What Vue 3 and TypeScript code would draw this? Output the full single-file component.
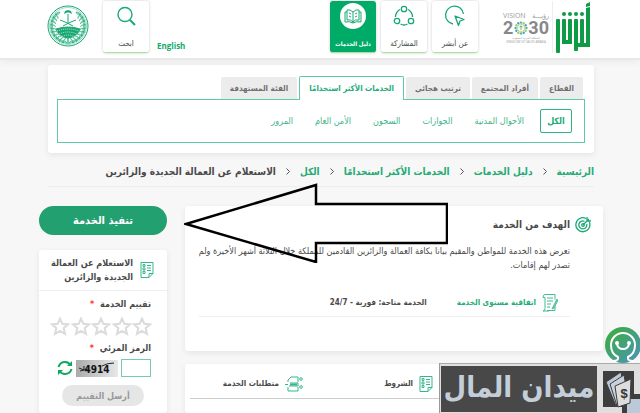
<script setup lang="ts">
import { ref } from 'vue'

const tabs = ['القطاع', 'أفراد المجتمع', 'ترتيب هجائي', 'الخدمات الأكثر استخدامًا', 'الفئة المستهدفة']
const activeTab = ref(3)
const filters = ['الكل', 'الأحوال المدنية', 'الجوازات', 'السجون', 'الأمن العام', 'المرور']
const activeFilter = ref(0)
const crumbs = ['الرئيسية', 'دليل الخدمات', 'الخدمات الأكثر استخدامًا', 'الكل']
const rating = ref(0)
const code = ref('')
const leaves = Array.from({ length: 11 }, (_, i) => i)
const petals = Array.from({ length: 12 }, (_, i) => i * 30)
</script>

<template>
  <div class="page" dir="rtl" lang="ar">
    <header class="header">
      <a class="absher" href="#" aria-label="أبشر">
        <svg width="36" height="52" viewBox="0 0 36 52" fill="#0d9b46">
          <rect x="1" y="17" width="4" height="34" rx="1" />
          <rect x="7" y="17" width="4" height="25" rx="1" />
          <rect x="13" y="17" width="4" height="25" rx="1" />
          <rect x="19" y="17" width="4" height="32" rx="1" />
          <rect x="25" y="17" width="4" height="28" rx="1" />
          <path d="M31 6l4-1v40h-4z" />
          <path d="M31 2l4-2v4l-4 1z" />
          <path d="M7 38h10v4H7zM19 41h16v4H19z" />
          <circle cx="9" cy="12" r="2" /><circle cx="15" cy="12" r="2" /><circle cx="21" cy="12" r="2" /><circle cx="27" cy="12" r="2" />
        </svg>
      </a>
      <div class="vision" dir="ltr">
        <div class="vision-top"><span>VISION</span><span>رؤيـــة</span></div>
        <div class="vision-year">
          <span>2</span>
          <svg width="14" height="14" viewBox="-7 -7 14 14">
            <circle v-for="(a, i) in petals" :key="a" r="1.2" cy="-5.4" :transform="`rotate(${a})`" :fill="['#4fb6a0', '#9ccb62', '#4a9cc7'][i % 3]" />
            <circle v-for="a in petals" :key="'i' + a" r=".8" cy="-3.6" :transform="`rotate(${a + 15})`" fill="#b8d98a" />
            <path d="M0-2v4M-1.500-1L0-2l1.500 1" stroke="#3a8a5a" stroke-width=".7" fill="none" />
          </svg>
          <span>30</span>
        </div>
        <div class="vision-sub">المملكة العربية السعودية</div>
        <div class="vision-sub">KINGDOM OF SAUDI ARABIA</div>
      </div>
      <nav class="tiles">
        <a class="tile" href="#">
          <svg width="22" height="24" viewBox="0 0 22 24" fill="none" stroke="#18a874" stroke-width="1.300">
            <path d="M9 21A9 9 0 1 1 19.500 11" /><path d="M11 13l9 3.500-4 1.500-1.500 4.500z" stroke-linejoin="round" />
          </svg>
          <span>عن أبشر</span>
        </a>
        <a class="tile" href="#">
          <svg width="22" height="24" viewBox="0 0 22 24" fill="none" stroke="#18a874" stroke-width="1.300">
            <circle cx="11" cy="6" r="2.700" /><circle cx="4" cy="18" r="2.700" /><circle cx="18" cy="18" r="2.700" />
            <path d="M7 6.500Q2.500 9 2.500 14M15 6.500Q19.500 9 19.500 14M7.500 21Q11 23 14.500 21" />
          </svg>
          <span>المشاركة</span>
        </a>
        <a class="tile tile-on" href="#">
          <svg width="26" height="26" viewBox="0 0 26 26" fill="none" stroke="#18a874">
            <circle cx="13" cy="13" r="13" fill="#fff" stroke="none" />
            <path d="M13 9v11M13 9q-3-3-6-2v10q4-1 6 2 2-3 6-2V7q-3-1-6 2zM7 9H5v10q5-1 8 1 3-2 8-1V9h-2M9 10l2 1M9 13l2 1M17 10l-2 1M17 13l-2 1" />
          </svg>
          <span>دليل الخدمات</span>
        </a>
      </nav>
      <a class="english" href="#" lang="en">English</a>
      <a class="tile" href="#">
        <svg width="20" height="24" viewBox="0 0 20 24" fill="none" stroke="#18a874" stroke-width="1.400">
          <circle cx="9" cy="11.500" r="7" /><path d="M14 17l5 5" stroke-width="2" />
        </svg>
        <span>ابحث</span>
      </a>
      <svg class="emblem" width="42" height="42" viewBox="-21 -21 42 42" fill="none" stroke="#18a874">
        <circle r="20" stroke-width="1" /><circle r="18.500" stroke-width=".4" />
        <g v-for="s in [1, -1]" :key="s" :transform="`scale(${s} 1)`">
          <path v-for="n in leaves" :key="n" d="M0 17.500q3-4 5-2-2 2-5 2M0 17.500q1-5-1.500-5" :transform="`rotate(${-n * 13 - 2})`" stroke-width=".6" fill="#a5dcc6" />
        </g>
        <path d="M-12 3q12-4 24 0-3 8-12 9Q-9 11-12 3z" fill="#18a874" />
        <path d="M-11 5q11-4 22 0M-9 8q9-4 18 0M-6 10.500q6-3 12 0" stroke="#fff" stroke-width=".7" stroke-dasharray="1 1" />
        <path d="M0-12v9" /><path d="M-8-6Q-2-4 5 0M8-6Q2-4-5 0" />
        <path d="M-4-12l1-3 3-1 3 1 1 3-3-1.500h-2z" fill="#18a874" stroke="none" />
      </svg>
    </header>

    <section class="services">
      <div class="tabs" role="tablist">
        <button v-for="(t, i) in tabs" :key="t" role="tab" :aria-selected="i === activeTab" :class="{ on: i === activeTab }" @click="activeTab = i">{{ t }}</button>
      </div>
      <div class="filters">
        <button v-for="(f, i) in filters" :key="f" :class="{ on: i === activeFilter }" @click="activeFilter = i">{{ f }}</button>
      </div>
    </section>

    <nav class="crumbs">
      <template v-for="c in crumbs" :key="c">
        <a href="#">{{ c }}</a>
        <svg width="4" height="7" viewBox="0 0 4 7" fill="none" stroke="#555"><path d="M.5.5l3 3-3 3" /></svg>
      </template>
      <span>الاستعلام عن العمالة الجديدة والزائرين</span>
    </nav>

    <main class="content">
      <div class="main">
        <article class="card goal">
          <h2>
            <svg width="16" height="17" viewBox="0 0 16 17" fill="none" stroke="#18a874" stroke-width="1.300">
              <path d="M11 2.500A7 7 0 1 0 14.300 6M9.500 5.300A4 4 0 1 0 11.700 8" /><circle cx="8" cy="9" r="1.300" /><path d="M8 9l6-6M12 1v4h4" />
            </svg>
            الهدف من الخدمة
          </h2>
          <p>تعرض هذه الخدمة للمواطن والمقيم بيانا بكافة العمالة والزائرين القادمين للمملكة خلال الثلاثة أشهر الأخيرة ولم تصدر لهم إقامات.</p>
          <div class="level">
            <a href="#">
              <svg width="16" height="18" viewBox="0 0 16 18" fill="none" stroke="#42bd90">
                <path d="M3 .5h10v5M13 12v4.500H5M3 .5q-2 0-2 3h2v11q0 2.500-2 2.500h6M5 4h6M5 7h6M5 10h4M5 13h3" /><path d="M15 5l-4 8-1 2 2-1 3.500-7z" fill="#8ed8bc" />
              </svg>
              اتفاقية مستوى الخدمة
            </a>
            <span>الخدمة متاحة: فورية - 24/7</span>
          </div>
        </article>
        <article class="card details">
          <div class="detail-tabs">
            <a href="#" class="steps">
              <svg width="14" height="16" viewBox="0 0 14 16" fill="none" stroke="#18a874"><path d="M1 3h12v9H1zM4 6h6M4 9h6" /></svg>
              الخطوات
            </a>
            <a href="#">
              <svg width="14" height="16" viewBox="0 0 14 16" fill="none" stroke="#35b887">
                <path d="M1 .5h12v11l-4 4H1zM9 15.500v-4h4M7 3.500h4M7 6h4M7 8.500h4" /><path d="M3 2.500h2v2H3zM3 6h2v2H3zM3 9.500h2v2H3z" />
              </svg>
              الشروط
            </a>
            <a href="#">
              <svg width="18" height="16" viewBox="0 0 18 16" fill="none" stroke="#35b887">
                <path d="M3 6V4l3-3h7v5M3 11v4h10v-4M0 8.500h3M5 7h8v3H4" /><path d="M5 8.500h7" stroke-width="2" /><circle cx="16" cy="3" r="1.300" /><circle cx="16" cy="11" r="1.300" />
              </svg>
              متطلبات الخدمة
            </a>
          </div>
        </article>
      </div>

      <aside class="side">
        <button class="run">تنفيذ الخدمة</button>
        <form class="card survey" @submit.prevent>
          <h3>
            <svg width="14" height="16" viewBox="0 0 14 16" fill="none" stroke="#35b887">
              <path d="M1 .5h12v11l-4 4H1zM9 15.500v-4h4M7 3.500h4M7 6h4M7 8.500h4" /><path d="M3 2.500h2v2H3zM3 6h2v2H3zM3 9.500h2v2H3z" />
            </svg>
            <span>الاستعلام عن العمالة الجديدة والزائرين</span>
          </h3>
          <div class="fields">
            <div class="label">تقييم الخدمة <b>*</b></div>
            <div class="stars">
              <button v-for="n in 5" :key="n" type="button" :aria-label="`${n}`" @click="rating = n">
                <svg width="20" height="19" viewBox="1 1 18 18" :fill="n <= rating ? '#ddd' : 'none'" stroke="#dcdcdc" stroke-width="2"><path d="M10 2.500l2.200 5 5.300.5-4 3.600 1.200 5.400L10 14.200 5.300 17l1.200-5.400-4-3.600 5.300-.5z" /></svg>
              </button>
            </div>
            <label class="label" for="captcha">الرمز المرئي <b>*</b></label>
            <div class="captcha">
              <input id="captcha" v-model="code" type="text" />
              <div class="code">
                <span>4914</span>
                <svg viewBox="0 0 42 17" fill="none" stroke="#222"><path d="M3 8l5 2V6M4 11l8-2M26 6q5-3 12-3" /></svg>
              </div>
              <button type="button" class="refresh" aria-label="تحديث">
                <svg width="16" height="16" viewBox="0 0 16 16" fill="none" stroke="#10a765" stroke-width="2"><path d="M1.500 7Q3 2 8 2q3.500 0 5.500 3M14.500 9Q13 14 8 14q-3.500 0-5.500-3" /><path d="M15 1v5h-5zM1 15v-5h5z" fill="#10a765" stroke="none" /></svg>
              </button>
            </div>
            <button class="send" disabled>أرسل التقييم</button>
          </div>
        </form>
      </aside>
    </main>

    <svg class="arrow" width="264" height="80" viewBox="0 0 264 80" fill="none" stroke="#000" stroke-width="2.500">
      <path d="M3 40L133 1v19h131V59H133v19z" transform="translate(-1 1)" />
    </svg>

    <button class="assistant" aria-label="المساعد">
      <svg width="36" height="36" viewBox="0 0 36 36" fill="none" stroke="#fff" stroke-width="2">
        <defs><linearGradient id="chat" x1="0" y1="0" x2="1" y2="1"><stop offset=".2" stop-color="#3fa950" /><stop offset="1" stop-color="#4b93bd" /></linearGradient></defs>
        <circle cx="18" cy="18" r="18" fill="url(#chat)" stroke="none" />
        <path d="M8 34q6 0 5-4Q6 27 6 18a12 12 0 0 1 24 0q0 9-7 12-1 4 5 4" /><path d="M12 17q1 5 6 5t6-5" /><circle cx="12" cy="16" r="1" /><circle cx="24" cy="16" r="1" />
      </svg>
    </button>

    <div class="brand">
      <div class="brand-icon">
        <svg width="43" height="48" viewBox="0 0 43 48">
          <path d="M6 5h31v36H6z" fill="#3e3e3e" />
          <path d="M25 28h18v20H25z" fill="#3e3e3e" /><path d="M30 33h13v15H30z" fill="#bcc9d8" />
          <g stroke="#3e3e3e" stroke-width="1"><path d="M9 16L24 6l4 24-9 10z" fill="#bccad8" /><path d="M13 18l14-9 4 23-11 8z" fill="#c9d2da" /><path d="M18 20l16-7-1 24-12 4z" fill="#ddd" /></g>
          <text x="27" y="32" text-anchor="middle">$</text>
        </svg>
      </div>
      <div class="brand-name">ميدان المال</div>
    </div>
  </div>
</template>

<style>
body { background: #f7f7f7; overflow: hidden; }
</style>

<style scoped>
* { box-sizing: border-box; }
.page { position: relative; min-height: 100vh; display: flex; flex-direction: column; font-family: "DejaVu Sans Condensed", "DejaVu Sans", sans-serif; font-size: 8px; color: #4a4a4a; background: #f7f7f7; }
a { color: inherit; text-decoration: none; }
button { font: inherit; color: inherit; border: 0; background: none; padding: 0; cursor: pointer; white-space: nowrap; }
h2, h3, p { margin: 0; }
svg { flex: none; display: block; }

.header { display: flex; height: 60px; padding: 1px 49px 0 47px; background: #fff; border-bottom: 2px solid #e8e8e8; box-shadow: 0 2px 8px #0000000d; }
.absher { padding: 1px 0 0 2px; border-left: 1px solid #eee; height: 52px; }
.vision { width: 46px; margin: 10px 3px 0 25px; color: #999; font-family: "Open Sans", "DejaVu Sans Condensed", sans-serif; line-height: 1; }
.vision-top { display: flex; justify-content: space-between; font-size: 7px; line-height: 9px; }
.vision-year { display: flex; align-items: center; justify-content: space-between; font: 700 18px/16px Roboto, sans-serif; color: #888; }
.vision-sub { font-size: 3px; line-height: 4px; text-align: center; white-space: nowrap; }
.tiles { display: flex; gap: 5px; }
.tile { width: 46px; height: 52px; padding: 2px 0; display: flex; flex-direction: column; align-items: center; justify-content: space-between; background: #fff; border-bottom: 1px solid #a5e59a; border-radius: 3px; box-shadow: 0 0 3px #0003; font-size: 8px; line-height: 12px; white-space: nowrap; }
.tile-on { background: #00ab67; color: #fff; font-weight: 700; font-size: 6px; }
.english { margin: 38px auto 0 8px; font: 700 8px/14px "Open Sans", sans-serif; color: #10a96a; }
.emblem { margin: 4px 14px 0 0; }

.services { margin: 5px 46px 0 48px; padding: 11px 9px 10px; background: #fff; border-radius: 3px; box-shadow: 0 2px 6px #00000014; }
.tabs { display: flex; gap: 2px; align-items: flex-end; padding-right: 2px; }
.tabs button { height: 22px; padding: 0 9px; background: #ececec; border-radius: 2px 2px 0 0; font-weight: 700; color: #707070; }
.tabs .on { height: 24px; margin-bottom: -1px; background: #fff; border: 1px solid #5fcaa2; border-bottom: 0; color: #22ab77; }
.filters { display: flex; align-items: center; gap: 22px; height: 44px; padding: 0 12px; border: 1px solid #5fcaa2; font-size: 9px; color: #42b58a; }
.filters button { height: 24px; }
.filters .on { width: 32px; margin-left: -6px; border: 1px solid #2bb482; border-radius: 2px; color: #22ab77; font-weight: 700; }

.crumbs { display: flex; align-items: center; gap: 10px; height: 34px; margin: 0 46px 0 48px; padding-top: 4px; border-bottom: 1px solid #eee; font-size: 10px; font-weight: 700; white-space: nowrap; }
.crumbs a { color: #25ab74; }

.content { flex: 1; display: flex; gap: 18px; padding: 19px 37px 0 39px; }
.main { flex: 1; min-width: 0; display: flex; flex-direction: column; gap: 13px; }
.card { background: #fff; border-radius: 3px; box-shadow: 0 2px 6px #00000014; }
.goal { height: 145px; padding: 8px 12px 0 6px; }
.goal h2 { display: flex; align-items: center; gap: 5px; height: 20px; font-size: 10px; }
.goal p { padding-right: 21px; margin-top: 10px; font-size: 9px; line-height: 14px; }
.level { display: flex; align-items: center; gap: 30px; height: 28px; margin: 17px 21px 0 8px; padding-right: 12px; border-bottom: 1px solid #eee; font-weight: 700; }
.level a { display: flex; align-items: center; gap: 6px; color: #25ab74; }
.details { flex: 1; padding: 12px 5px 0; }
.detail-tabs { display: grid; grid-template-columns: 4fr 5fr 5fr; height: 23px; border-bottom: 1px solid #ccc; font-size: 8px; font-weight: 700; }
.detail-tabs a { display: flex; align-items: flex-start; justify-content: center; gap: 6px; line-height: 16px; }
.steps { border-bottom: 2px solid #16a56c; }

.side { width: 128px; display: flex; flex-direction: column; gap: 15px; }
.run { height: 29px; border-radius: 15px; background: #22a06f; color: #fff; font-size: 11px; font-weight: 700; }
.survey { flex: 1; }
.survey h3 { display: flex; align-items: center; gap: 7px; height: 41px; padding: 0 13px 0 6px; border-bottom: 1px solid #eee; font-size: 9px; line-height: 14px; }
.fields { display: flex; flex-direction: column; padding: 5px 16px 0; }
.label { font-size: 9px; font-weight: 700; line-height: 16px; }
.label b { color: #f33; margin-right: 3px; }
.stars { display: flex; justify-content: space-between; width: 102px; height: 28px; margin-right: -1px; }
.captcha { display: flex; align-items: center; gap: 3px; margin-top: 3px; }
.captcha input { width: 30px; height: 18px; padding: 0 3px; border: 1px solid #74cda9; background: #fff; font: inherit; }
.code { position: relative; width: 42px; height: 17px; background: linear-gradient(90deg, #aaa, #e8e8e8); text-align: center; font: 700 10px/19px "DejaVu Sans Condensed", sans-serif; color: #111; }
.code svg { position: absolute; inset: 0; }
.send { align-self: center; width: 82px; height: 21px; margin-top: 8px; border-radius: 11px; background: #e6e6e6; color: #999; font-size: 9px; font-weight: 700; }

.arrow { position: absolute; left: 184px; top: 183px; }
.assistant { position: absolute; right: -1px; bottom: 50px; }
.brand { position: absolute; right: 0; bottom: 0; display: flex; height: 50px; padding: 2px 0 0 1px; background: #ddddddf0; border-top: 1px solid #aaa; border-left: 1px solid #999; }
.brand-name { width: 156px; height: 46px; background: #484848; color: #c3ced9; font-size: 29px; font-weight: 700; line-height: 42px; text-align: center; white-space: nowrap; }
.brand-icon text { font: 700 13px "Liberation Sans", sans-serif; fill: #333; }
</style>
